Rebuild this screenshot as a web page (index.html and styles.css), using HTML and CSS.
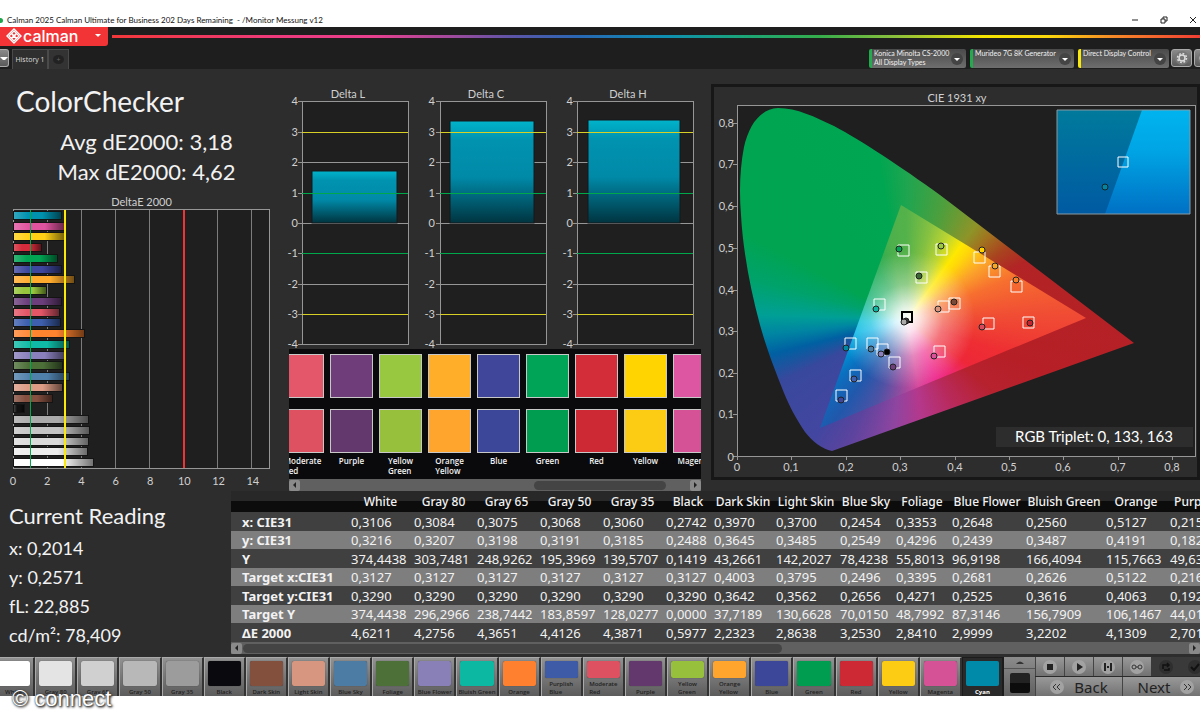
FILE: index.html
```html
<!DOCTYPE html>
<html lang="en">
<head>
    <meta charset="UTF-8">
    <meta name="viewport" content="width=device-width, initial-scale=1.0">
    <title>Calman 2025 - Monitor Messung v12</title>
    <link rel="stylesheet" href="styles.css">
</head>
<body>
    <header class="titlebar">
        <span class="status-dot"></span>
        <span class="title">Calman 2025 Calman Ultimate for Business 202 Days Remaining &nbsp;- /Monitor Messung v12</span>
        <div class="window-buttons">
            <button aria-label="Minimize"><svg width="8" height="8" viewBox="0 0 8 8"><path d="M1 4h6"/></svg></button>
            <button aria-label="Restore"><svg width="8" height="8" viewBox="0 0 8 8"><path d="M1 3h4v4h-4zM3 3v-2h4v4h-2"/></svg></button>
            <button aria-label="Close"><svg width="8" height="8" viewBox="0 0 8 8"><path d="M1 1l6 6M7 1l-6 6"/></svg></button>
        </div>
    </header>

    <div class="app">
        <div class="brandbar">
            <button class="brand">
                <svg width="16" height="16" viewBox="0 0 16 16" fill="none" stroke="#fff"><path d="M8 1l7 7-7 7-7-7z" stroke-width="1.4"/><path d="M8 3l2.3 2.3L8 7.600 5.700 5.300zM8 8.400l2.300 2.300L8 13l-2.300-2.300zM5.300 5.700L7.600 8l-2.300 2.300L3 8zM10.700 5.700L13 8l-2.300 2.300L8.400 8z" stroke-width="1.200"/></svg>
                <span class="brand-name">calman</span>
                <span class="caret"></span>
            </button>
            <div class="rainbow"></div>
        </div>

        <div class="toolbar">
            <button class="side-button" aria-label="Menu"><span class="caret"></span></button>
            <button class="tab">History 1</button>
            <button class="tab tab-add" aria-label="Add tab"><span>+</span></button>
            <div class="devices">
                <button class="device green"><span>Konica Minolta CS-2000<br>All Display Types</span><i class="drop"></i></button>
                <button class="device green wide"><span>Murideo 7G 8K Generator</span><i class="drop"></i></button>
                <button class="device yellow"><span>Direct Display Control</span><i class="drop"></i></button>
                <button class="gear" aria-label="Settings"><svg width="14" height="14" viewBox="0 0 14 14" fill="none" stroke="#ddd"><circle cx="7" cy="7" r="3" stroke-width="1.500"/><circle cx="7" cy="7" r="4.500" stroke-width="1.500" stroke-dasharray="1.800 1.730"/></svg></button>
                <button class="gear" aria-label="Help"><svg width="14" height="14" viewBox="0 0 14 14" fill="none" stroke="#ddd"><circle cx="7" cy="7" r="5"/></svg></button>
            </div>
        </div>

        <main class="workspace">
            <div class="charts">
                <section class="summary">
                    <h1>ColorChecker</h1>
                    <p class="score">Avg dE2000: 3,18</p>
                    <p class="score">Max dE2000: 4,62</p>
                    <h2 class="chart-title">DeltaE 2000</h2>
                    <div class="de-plot">
                        <div class="bars">
                            <span style="width:18.6%;background-color:#0092af"></span>
                            <span style="width:20%;background-color:#e0539f"></span>
                            <span style="width:20%;background-color:#ffd016"></span>
                            <span style="width:10.6%;background-color:#d52b3a"></span>
                            <span style="width:16.8%;background-color:#00a453"></span>
                            <span style="width:18.4%;background-color:#3d479e"></span>
                            <span style="width:23.6%;background-color:#ffab2d"></span>
                            <span style="width:12.4%;background-color:#97c63d"></span>
                            <span style="width:18.6%;background-color:#6c3f7c"></span>
                            <span style="width:17.8%;background-color:#e35668"></span>
                            <span style="width:18%;background-color:#3d5fae"></span>
                            <span style="width:27.5%;background-color:#ff842f"></span>
                            <span style="width:21.4%;background-color:#0fbba6"></span>
                            <span style="width:20%;background-color:#8a80bd"></span>
                            <span style="width:18.9%;background-color:#4d7039"></span>
                            <span style="width:21.6%;background-color:#4f80aa"></span>
                            <span style="width:19%;background-color:#dc9c85"></span>
                            <span style="width:14.8%;background-color:#865040"></span>
                            <span style="width:4%;background-color:#111"></span>
                            <span style="width:29.2%;background-color:#aaa"></span>
                            <span style="width:29.4%;background-color:#c4c4c4"></span>
                            <span style="width:29%;background-color:#dadada"></span>
                            <span style="width:28.5%;background-color:#ececec"></span>
                            <span style="width:30.8%;background-color:#fff"></span>
                        </div>
                        <i class="limit limit-1"></i>
                        <i class="limit limit-3"></i>
                        <i class="limit limit-10"></i>
                    </div>
                    <div class="de-axis"><span>0</span><span>2</span><span>4</span><span>6</span><span>8</span><span>10</span><span>12</span><span>14</span></div>
                </section>

                <section class="deltas">
                    <svg class="delta-chart" viewBox="280 85 421 264">
                        <defs>
                            <linearGradient id="cyan" x1="0" y1="0" x2="0" y2="1">
                                <stop offset="0" stop-color="#00b4cb"/>
                                <stop offset=".18" stop-color="#0093b0"/>
                                <stop offset=".55" stop-color="#008aa8"/>
                                <stop offset="1" stop-color="#003440"/>
                            </linearGradient>
                        </defs>
                        <g fill="#1f1f1f" stroke="#969696" shape-rendering="crispEdges">
                            <path d="M302 101h106v243H302z"/>
                            <path d="M440 101h106v243H440z"/>
                            <path d="M577 101h116v243H577z"/>
                            <path d="M298 101h4M298 132h4M298 162h110M298 193h4M298 223h110M298 253h4M298 284h110M298 314h4M298 344h4"/>
                            <path d="M436 101h4M436 132h4M436 162h110M436 193h4M436 223h110M436 253h4M436 284h110M436 314h4M436 344h4"/>
                            <path d="M573 101h4M573 132h4M573 162h120M573 193h4M573 223h120M573 253h4M573 284h120M573 314h4M573 344h4"/>
                        </g>
                        <g fill="url(#cyan)" stroke="#17191a">
                            <rect x="312" y="171" width="85" height="52"/>
                            <rect x="450" y="121" width="84" height="102"/>
                            <rect x="588" y="120" width="92" height="103"/>
                        </g>
                        <g stroke-width="1" shape-rendering="crispEdges">
                            <path stroke="#d8cf26" d="M302 132h106M440 132h106M577 132h116M302 314h106M440 314h106M577 314h116"/>
                            <path stroke="#00a84c" d="M302 193h106M440 193h106M577 193h116M302 253h106M440 253h106M577 253h116"/>
                        </g>
                        <g class="tick-title" text-anchor="middle">
                            <text x="348" y="98">Delta L</text>
                            <text x="486" y="98">Delta C</text>
                            <text x="628" y="98">Delta H</text>
                        </g>
                        <g class="tick" text-anchor="end">
                            <text x="298" y="105">4</text><text x="298" y="136">3</text><text x="298" y="166">2</text><text x="298" y="197">1</text><text x="298" y="227">0</text><text x="298" y="257">-1</text><text x="298" y="288">-2</text><text x="298" y="318">-3</text><text x="298" y="348">-4</text>
                            <text x="435" y="105">4</text><text x="435" y="136">3</text><text x="435" y="166">2</text><text x="435" y="197">1</text><text x="435" y="227">0</text><text x="435" y="257">-1</text><text x="435" y="288">-2</text><text x="435" y="318">-3</text><text x="435" y="348">-4</text>
                            <text x="573" y="105">4</text><text x="573" y="136">3</text><text x="573" y="166">2</text><text x="573" y="197">1</text><text x="573" y="227">0</text><text x="573" y="257">-1</text><text x="573" y="288">-2</text><text x="573" y="318">-3</text><text x="573" y="348">-4</text>
                        </g>
                    </svg>
                    <div class="patches">
                        <div class="patch-row">
                            <div class="patch"><b class="moderate-a"></b><b class="moderate"></b><span>Moderate Red</span></div>
                            <div class="patch"><b class="purple-a"></b><b class="purple"></b><span>Purple</span></div>
                            <div class="patch"><b class="lime-a"></b><b class="lime"></b><span>Yellow Green</span></div>
                            <div class="patch"><b class="amber-a"></b><b class="amber"></b><span>Orange Yellow</span></div>
                            <div class="patch"><b class="blue-a"></b><b class="blue"></b><span>Blue</span></div>
                            <div class="patch"><b class="green-a"></b><b class="green-c"></b><span>Green</span></div>
                            <div class="patch"><b class="red-a"></b><b class="red"></b><span>Red</span></div>
                            <div class="patch"><b class="yellow-a"></b><b class="yellow-c"></b><span>Yellow</span></div>
                            <div class="patch"><b class="magenta-a"></b><b class="magenta"></b><span>Magenta</span></div>
                        </div>
                        <div class="scrollbar">
                            <button class="arrow left" aria-label="Scroll left"></button>
                            <div class="track"><div class="thumb patch-thumb"></div></div>
                            <button class="arrow right" aria-label="Scroll right"></button>
                        </div>
                    </div>
                </section>

                <section class="cie">
                    <svg viewBox="715 88 482 388">
                        <defs>
                            <clipPath id="locus"><path d="M832 451C822 449 812 441 805 432C795 417 789 405 784 393C775 370 767 350 760 325C750 288 743 250 741 215C739 190 740 168 744 147C749 125 760 109 778 108C797 108 815 117 834 126C862 141 900 166 940 195L1134 343Z"/></clipPath>
                            <clipPath id="gamut"><path d="M901 205L1086 318L820 428Z"/></clipPath>
                            <linearGradient id="insetDark" x1="0" y1="0" x2="0" y2="1"><stop offset="0" stop-color="#007a9c"/><stop offset="1" stop-color="#005aa2"/></linearGradient>
                            <linearGradient id="insetLight" x1="0" y1="0" x2="0" y2="1"><stop offset="0" stop-color="#00b4f0"/><stop offset=".4" stop-color="#00a4e4"/><stop offset="1" stop-color="#0070c4"/></linearGradient>
                        </defs>
                        <text class="tick-title" x="957" y="102" text-anchor="middle">CIE 1931 xy</text>
                        <path d="M737 105h458v351H737z" fill="#1f1f1f" stroke="#969696" shape-rendering="crispEdges"/>
                        <path stroke="#969696" shape-rendering="crispEdges" d="M733 123h4M733 164h4M733 206h4M733 248h4M733 290h4M733 331h4M733 373h4M733 414h4M733 456h4M737 456v4M791 456v4M846 456v4M900 456v4M955 456v4M1009 456v4M1063 456v4M1118 456v4M1172 456v4"/>
                        <g class="tick" text-anchor="end">
                            <text x="734" y="127">0,8</text><text x="734" y="168">0,7</text><text x="734" y="210">0,6</text><text x="734" y="252">0,5</text><text x="734" y="294">0,4</text><text x="734" y="335">0,3</text><text x="734" y="377">0,2</text><text x="734" y="418">0,1</text><text x="734" y="461">0</text>
                        </g>
                        <g class="tick" text-anchor="middle">
                            <text x="737" y="471">0</text><text x="791" y="471">0,1</text><text x="846" y="471">0,2</text><text x="900" y="471">0,3</text><text x="955" y="471">0,4</text><text x="1009" y="471">0,5</text><text x="1063" y="471">0,6</text><text x="1118" y="471">0,7</text><text x="1172" y="471">0,8</text>
                        </g>
                        <g clip-path="url(#locus)"><foreignObject x="737" y="105" width="400" height="350"><div class="hue hue-outer"></div></foreignObject></g>
                        <g clip-path="url(#gamut)"><foreignObject x="737" y="105" width="400" height="350"><div class="hue hue-inner"></div></foreignObject></g>

                        <!-- targets -->
                        <g fill="none" stroke="#fff">
                            <path d="M898 245h11v11h-11zM936 244h11v11h-11zM974 252h11v11h-11zM989 266h11v11h-11zM1011 281h11v11h-11zM916 272h11v11h-11zM874 299h11v11h-11zM938 301h11v11h-11zM949 298h11v11h-11zM983 318h11v11h-11zM1023 317h11v11h-11zM845 338h11v11h-11zM867 338h11v11h-11zM877 344h11v11h-11zM889 357h11v11h-11zM934 346h11v11h-11zM850 370h11v11h-11zM836 390h11v11h-11z"/>
                            <path stroke="#000" stroke-width="2" d="M902 312h10v10h-10z"/>
                        </g>
                        <!-- readings -->
                        <g stroke="#222">
                            <circle cx="899" cy="249" r="3" fill="#00a651"/><circle cx="941" cy="246" r="3" fill="#9aca3c"/><circle cx="982" cy="250" r="3" fill="#ffd200"/><circle cx="995" cy="266" r="3" fill="#fba61f"/><circle cx="1016" cy="280" r="3" fill="#f5822a"/>
                            <circle cx="919" cy="276" r="3" fill="#3c6a32"/><circle cx="876" cy="309" r="3" fill="#12b5a0"/><circle cx="938" cy="309" r="3" fill="#d8967f"/><circle cx="954" cy="302" r="3" fill="#7a4a38"/><circle cx="982" cy="327" r="3" fill="#d94b5c"/>
                            <circle cx="1030" cy="323" r="3" fill="#c42330"/><circle cx="846" cy="348" r="3" fill="#0086a3"/><circle cx="871" cy="349" r="3" fill="#4a7fa8"/><circle cx="881" cy="354" r="3" fill="#8a80bd"/><circle cx="887" cy="352" r="3" fill="#000"/>
                            <circle cx="893" cy="367" r="3" fill="#6c3f7c"/><circle cx="934" cy="356" r="3" fill="#d9529a"/><circle cx="854" cy="379" r="3" fill="#3d5fae"/><circle cx="841" cy="400" r="3" fill="#3d479e"/><circle cx="906" cy="321" r="3" fill="#333"/><circle cx="904" cy="322" r="3" fill="#aaa"/>
                        </g>

                        <path d="M1057 110h133v104h-133z" fill="url(#insetDark)"/>
                        <path d="M1142 110h48v104h-85z" fill="url(#insetLight)"/>
                        <path d="M1057 110h133v104h-133z" fill="none" stroke="#8c9aa0"/>
                        <path d="M1118 157h10v10h-10z" fill="none" stroke="#fff"/>
                        <circle cx="1105" cy="187" r="3" fill="#0086a3" stroke="#122"/>
                        <path d="M996 427h197v20H996z" fill="#2d2d2d"/>
                        <text class="triplet" x="1094" y="442" text-anchor="middle">RGB Triplet: 0, 133, 163</text>
                    </svg>
                </section>
            </div>

            <div class="data">
                <section class="reading">
                    <h2>Current Reading</h2>
                    <p>x: 0,2014</p>
                    <p>y: 0,2571</p>
                    <p>fL: 22,885</p>
                    <p>cd/m²: 78,409</p>
                </section>
                <div class="table-wrap">
                    <table>
                        <colgroup><col class="c-head"><col class="c-m"><col class="c-m"><col class="c-m"><col class="c-m"><col class="c-m"><col class="c-xs"><col class="c-n"><col class="c-l"><col class="c-s"><col class="c-s"><col class="c-xl"><col class="c-xxl"><col class="c-l"><col class="c-last"></colgroup>
                        <thead>
                            <tr><th></th><th>White</th><th>Gray 80</th><th>Gray 65</th><th>Gray 50</th><th>Gray 35</th><th>Black</th><th>Dark Skin</th><th>Light Skin</th><th>Blue Sky</th><th>Foliage</th><th>Blue Flower</th><th>Bluish Green</th><th>Orange</th><th>Purplish Blue</th></tr>
                        </thead>
                        <tbody>
                            <tr><th>x: CIE31</th><td>0,3106</td><td>0,3084</td><td>0,3075</td><td>0,3068</td><td>0,3060</td><td>0,2742</td><td>0,3970</td><td>0,3700</td><td>0,2454</td><td>0,3353</td><td>0,2648</td><td>0,2560</td><td>0,5127</td><td>0,215</td></tr>
                            <tr><th>y: CIE31</th><td>0,3216</td><td>0,3207</td><td>0,3198</td><td>0,3191</td><td>0,3185</td><td>0,2488</td><td>0,3645</td><td>0,3485</td><td>0,2549</td><td>0,4296</td><td>0,2439</td><td>0,3487</td><td>0,4191</td><td>0,182</td></tr>
                            <tr><th>Y</th><td>374,4438</td><td>303,7481</td><td>248,9262</td><td>195,3969</td><td>139,5707</td><td>0,1419</td><td>43,2661</td><td>142,2027</td><td>78,4238</td><td>55,8013</td><td>96,9198</td><td>166,4094</td><td>115,7663</td><td>49,63</td></tr>
                            <tr><th>Target x:CIE31</th><td>0,3127</td><td>0,3127</td><td>0,3127</td><td>0,3127</td><td>0,3127</td><td>0,3127</td><td>0,4003</td><td>0,3795</td><td>0,2496</td><td>0,3395</td><td>0,2681</td><td>0,2626</td><td>0,5122</td><td>0,216</td></tr>
                            <tr><th>Target y:CIE31</th><td>0,3290</td><td>0,3290</td><td>0,3290</td><td>0,3290</td><td>0,3290</td><td>0,3290</td><td>0,3642</td><td>0,3562</td><td>0,2656</td><td>0,4271</td><td>0,2525</td><td>0,3616</td><td>0,4063</td><td>0,192</td></tr>
                            <tr><th>Target Y</th><td>374,4438</td><td>296,2966</td><td>238,7442</td><td>183,8597</td><td>128,0277</td><td>0,0000</td><td>37,7189</td><td>130,6628</td><td>70,0150</td><td>48,7992</td><td>87,3146</td><td>156,7909</td><td>106,1467</td><td>44,01</td></tr>
                            <tr><th>ΔE 2000</th><td>4,6211</td><td>4,2756</td><td>4,3651</td><td>4,4126</td><td>4,3871</td><td>0,5977</td><td>2,2323</td><td>2,8638</td><td>3,2530</td><td>2,8410</td><td>2,9999</td><td>3,2202</td><td>4,1309</td><td>2,701</td></tr>
                        </tbody>
                    </table>
                    <div class="scrollbar">
                        <button class="arrow left" aria-label="Scroll left"></button>
                        <div class="track"><div class="thumb table-thumb"></div></div>
                        <button class="arrow right" aria-label="Scroll right"></button>
                    </div>
                </div>
            </div>
        </main>

        <footer class="bottombar">
            <div class="swatches">
                <button><b class="white"></b><span>White</span></button>
                <button><b class="gray80"></b><span>Gray 80</span></button>
                <button><b class="gray65"></b><span>Gray 65</span></button>
                <button><b class="gray50"></b><span>Gray 50</span></button>
                <button><b class="gray35"></b><span>Gray 35</span></button>
                <button><b class="black"></b><span>Black</span></button>
                <button><b class="dark-skin"></b><span>Dark Skin</span></button>
                <button><b class="light-skin"></b><span>Light Skin</span></button>
                <button><b class="blue-sky"></b><span>Blue Sky</span></button>
                <button><b class="foliage"></b><span>Foliage</span></button>
                <button><b class="blue-flower"></b><span>Blue Flower</span></button>
                <button><b class="bluish-green"></b><span>Bluish Green</span></button>
                <button><b class="orange"></b><span>Orange</span></button>
                <button><b class="purplish"></b><span>Purplish<br>Blue</span></button>
                <button><b class="moderate"></b><span>Moderate<br>Red</span></button>
                <button><b class="purple"></b><span>Purple</span></button>
                <button><b class="lime"></b><span>Yellow<br>Green</span></button>
                <button><b class="amber"></b><span>Orange<br>Yellow</span></button>
                <button><b class="blue"></b><span>Blue</span></button>
                <button><b class="green-c"></b><span>Green</span></button>
                <button><b class="red"></b><span>Red</span></button>
                <button><b class="yellow-c"></b><span>Yellow</span></button>
                <button><b class="magenta"></b><span>Magenta</span></button>
                <button class="selected"><b class="cyan"></b><span>Cyan</span></button>
            </div>
            <div class="preview">
                <button aria-label="Expand"><svg width="10" height="8" viewBox="0 0 10 8"><path d="M1 5q4-5 8 0z" fill="#333"/></svg></button>
                <div class="preview-box"></div>
            </div>
            <div class="controls">
                <div class="transport">
                    <button aria-label="Stop"><svg width="14" height="14" viewBox="0 0 14 14"><path d="M4 4h6v6H4z"/></svg></button>
                    <button aria-label="Play"><svg width="14" height="14" viewBox="0 0 14 14"><path d="M5 3l6 4-6 4z"/></svg></button>
                    <button aria-label="Step"><svg width="14" height="14" viewBox="0 0 14 14"><path d="M3 3h2v8H3zM9 3h2v8H9zM6 6h2v2H6z"/></svg></button>
                    <button aria-label="Loop"><svg width="14" height="14" viewBox="0 0 14 14" fill="none" stroke="#333"><circle cx="4" cy="7" r="2"/><circle cx="10" cy="7" r="2"/><path d="M6 7h2"/></svg></button>
                    <button class="off" aria-label="Repeat"><svg width="14" height="14" viewBox="0 0 14 14" fill="none" stroke="#111" stroke-width="1.500"><path d="M4 9V5h6M8 3l2 2-2 2M10 8v2H5"/></svg></button>
                    <button class="off" aria-label="Accept"><svg width="14" height="14" viewBox="0 0 14 14" fill="none" stroke="#111" stroke-width="2"><path d="M3 7l3 3 5-6"/></svg></button>
                </div>
                <div class="nav">
                    <button><svg width="14" height="14" viewBox="0 0 14 14" fill="none" stroke="#333"><path d="M6 4L3 7l3 3M10 4L7 7l3 3"/></svg>Back</button>
                    <button>Next<svg width="14" height="14" viewBox="0 0 14 14" fill="none" stroke="#333"><path d="M4 4l3 3-3 3M8 4l3 3-3 3"/></svg></button>
                </div>
            </div>
        </footer>
        <div class="watermark">© connect</div>
    </div>
</body>
</html>
```

FILE: styles.css
```css
* {
    box-sizing: border-box;
}

body {
    margin: 0;
    min-height: 100vh;
    background: #fff;
    color: #f2f2f2;
    font-family: Lato, "Liberation Sans", sans-serif;
    overflow-x: hidden;
}

button {
    margin: 0;
    padding: 0;
    border: none;
    background: none;
    color: inherit;
    font: inherit;
}

h1, h2, p {
    margin: 0;
    font-weight: normal;
}

svg {
    display: block;
}

/* title bar */
.titlebar {
    display: flex;
    align-items: center;
    height: 27px;
    padding-top: 13px;
    color: #111;
    font: 8px/12px Lato, sans-serif;
}

.status-dot {
    width: 3px;
    height: 5px;
    margin-right: 4px;
    border-radius: 0 3px 3px 0;
    background: #1ea54c;
}

.window-buttons {
    display: flex;
    gap: 21px;
    margin-left: auto;
    padding-right: 3px;
}

.window-buttons path {
    fill: none;
    stroke: #222;
}

.app {
    position: relative;
    background: #2d2d2d;
}

/* brand bar */
.brandbar {
    display: flex;
    gap: 4px;
    background: #1e1e1e;
}

.brand {
    display: flex;
    align-items: center;
    width: 108px;
    height: 19px;
    padding: 0 7px 2px 6px;
    border-radius: 0 0 3px 0;
    background: #f23436;
    color: #fff;
}

.brand-name {
    margin: 0 auto 0 1px;
    font: 500 16px/16px Inter, sans-serif;
}

.caret {
    border: 3px solid transparent;
    border-top-color: #fff;
    border-bottom: 0;
}

.rainbow {
    flex: 1;
    height: 3px;
    margin-top: 8px;
    background: linear-gradient(90deg, #f2383a 0%, #ee3a7c 15%, #e8408f 24%, #a24a9c 31%, #5a55a8 37%, #2868b4 43%, #0e8fb0 51%, #1ba578 58%, #35ad4c 65%, #8cc03c 72%, #f5e500 80%, #fbd80c 86%, #f68a28 92%, #f23e34 100%);
}

/* toolbar */
.toolbar {
    display: flex;
    height: 23px;
    padding-top: 3px;
    background: #1e1e1e;
    color: #ddd;
    font-size: 7px;
    line-height: 9px;
    overflow: hidden;
}

.side-button {
    width: 9px;
    height: 18px;
    margin-right: 3px;
    border: 1px solid #aaa;
    border-left: 0;
    border-radius: 0 3px 3px 0;
    background: linear-gradient(#8a8a8a, #5a5a5a);
}

.side-button .caret {
    display: block;
}

.tab {
    width: 36px;
    border: 1px solid #4a4a4a;
    border-bottom: 0;
    background: #2f2f2f;
    font-family: "Open Sans", sans-serif;
}

.tab-add {
    width: 21px;
    background: #333;
}

.tab-add span {
    display: block;
    width: 11px;
    margin: 0 auto;
    border-radius: 50%;
    background: #222;
    color: #666;
}

.devices {
    display: flex;
    gap: 4px;
    margin: 0 -15px 0 auto;
}

.device {
    display: flex;
    width: 97px;
    height: 19px;
    padding: 0 3px 0 2px;
    border-left: 3px solid;
    border-radius: 2px;
    background: linear-gradient(#4a4a4a, #6e6e6e);
    text-align: left;
    white-space: nowrap;
}

.device.wide {
    width: 104px;
}

.device.green {
    border-color: #24a94f;
}

.device.yellow {
    width: 91px;
    border-color: #f8e80c;
}

.device span {
    flex: 1;
    color: #f2f2f2;
}

.drop {
    align-self: center;
    width: 12px;
    height: 12px;
    padding: 5px 3px;
    border-radius: 50%;
    background: #444;
}

.drop::after {
    content: "";
    display: block;
    border: 3px solid transparent;
    border-top-color: #fff;
    border-bottom: 0;
}

.gear {
    width: 21px;
    height: 18px;
    padding-left: 3px;
    margin-left: -2px;
    border: 1px solid #aaa;
    border-radius: 3px;
    background: linear-gradient(#8a8a8a, #5a5a5a);
}

.gear svg {
    border-radius: 50%;
    background: #777;
}

/* charts */
.charts {
    display: grid;
    grid-template-columns: minmax(0, 280fr) minmax(0, 421fr) minmax(0, 499fr);
    min-height: 422px;
    overflow: hidden;
}

.summary {
    padding: 14px 10px 0 13px;
}

.summary h1 {
    padding-left: 3px;
    font-size: 28px;
    line-height: 36px;
}

.score {
    padding-left: 10px;
    font-size: 22px;
    line-height: 30px;
    text-align: center;
}

.summary .score:first-of-type {
    margin-top: 8px;
}

.chart-title {
    padding-top: 8px;
    font-size: 11px;
    line-height: 14px;
    color: #d0d0d0;
    text-align: center;
}

.de-plot {
    position: relative;
    height: 260px;
    border: 1px solid #969696;
    background: repeating-linear-gradient(90deg, transparent 0, transparent calc(100% / 7.5 - 1px), #7c7c7c calc(100% / 7.5 - 1px), #7c7c7c calc(100% / 7.5)) #1f1f1f;
}

.bars {
    display: flex;
    flex-direction: column;
    justify-content: space-around;
    height: 100%;
}

.bars span {
    height: 7px;
    background-image: linear-gradient(90deg, rgba(255, 255, 255, 0.2), transparent 30%, transparent 60%, rgba(0, 0, 0, 0.55));
    box-shadow: 0 0 0 1px #141414;
}

.limit {
    position: absolute;
    top: 0;
    bottom: 0;
    width: 2px;
    margin-left: -1px;
}

.limit-1 {
    left: calc(100% / 15);
    width: 1px;
    background: #00a84c;
}

.limit-3 {
    left: calc(100% / 15 * 3);
    background: #f8e80c;
}

.limit-10 {
    left: calc(100% / 15 * 10);
    background: #ee3436;
}

.de-axis {
    display: grid;
    grid-template-columns: repeat(8, 1fr);
    width: calc(100% / 15 * 16);
    margin-left: calc(-100% / 15);
    padding-top: 5px;
    font-size: 11px;
    line-height: 14px;
    color: #d0d0d0;
    text-align: center;
}

.tick, .tick-title {
    fill: #d0d0d0;
    font-size: 11px;
}

.delta-chart {
    width: 100%;
    margin-top: 16px;
}

.patches {
    margin-left: 9px;
    background: #0a0a0c;
    overflow: hidden;
}

.patch-row {
    display: flex;
    gap: 6px;
    height: 130px;
    margin-left: -8px;
    padding-top: 5px;
}

.patch {
    flex: 0 0 43px;
}

.patch b {
    display: block;
    height: 44px;
    margin-bottom: 11px;
    border: 1px solid #c8c8c8;
}

.patch b + b {
    margin-bottom: 3px;
}

.patch span {
    display: block;
    width: min-content;
    margin: 0 auto;
    font: 600 8px/10px "Open Sans", sans-serif;
}

.scrollbar {
    display: flex;
    align-items: center;
    gap: 1px;
    height: 12px;
    background: #606060;
}

.arrow {
    display: flex;
    align-items: center;
    justify-content: center;
    width: 11px;
    height: 11px;
    border-radius: 2px;
    background: #8a8a8a;
}

.arrow::after {
    content: "";
    border: 3px solid transparent;
}

.arrow.left::after {
    border-right-color: #222;
    border-left: 0;
}

.arrow.right::after {
    border-left-color: #222;
    border-right: 0;
}

.track {
    flex: 1;
}

.thumb {
    height: 9px;
    border-radius: 5px;
    background: #444;
}

.patch-thumb {
    width: 34%;
    margin-left: 60%;
}

.table-thumb {
    width: 57%;
}

.cie {
    align-self: start;
    margin: 15px 0 0 10px;
    padding: 1px 0 1px 1px;
    border: 3px solid #171717;
}

.cie > svg {
    width: 100%;
}

.hue {
    width: 400px;
    height: 350px;
}

/* both hue wheels turn about the white point */
.hue-outer {
    background: conic-gradient(from 0deg at 170px 215px, #1fa550 0deg, #4f9f3c 18deg, #8e9428 36deg, #a0741f 44deg, #a8441f 54deg, #b22425 64deg, #b61f26 110deg, #b7222f 130deg, #b82a5c 152deg, #b4388c 172deg, #8f45a0 187deg, #5b449e 206deg, #4346a0 218deg, #38489c 244deg, #0060a2 256deg, #0084a2 264deg, #009f96 272deg, #00a26c 284deg, #00a451 298deg, #00a651 350deg, #1fa550 360deg);
}

.hue-inner {
    background:
        radial-gradient(circle at 170px 215px, #fff 0, rgba(255, 255, 255, 0.85) 12px, rgba(255, 255, 255, 0.35) 36px, transparent 68px),
        conic-gradient(from 0deg at 170px 215px, #55b24a 0deg, #86c141 14deg, #bcd532 26deg, #ffe800 36deg, #ffd60a 42deg, #fba32a 54deg, #f7702f 68deg, #f04c34 88deg, #ee2e33 108deg, #ee2738 126deg, #ef2a70 140deg, #ee2c90 154deg, #d8489c 170deg, #8f4c9f 186deg, #4f52a4 200deg, #2058ac 216deg, #0a70c0 230deg, #0094d6 242deg, #00b6e6 256deg, #00bfd8 268deg, #00b69c 284deg, #08ad66 304deg, #22aa52 330deg, #4cb04c 348deg, #55b24a 360deg);
}

.triplet {
    fill: #fff;
    font-size: 15px;
}

/* readings and table */
.data {
    display: flex;
    height: 166px;
}

.reading {
    flex: 0 0 231px;
    padding: 10px 0 0 9px;
    font-size: 18px;
    line-height: 29px;
}

.reading h2 {
    margin-bottom: 3px;
    font-size: 22px;
    line-height: 30px;
}

.table-wrap {
    flex: 1;
    min-width: 0;
    overflow: hidden;
}

table {
    width: 1025px;
    table-layout: fixed;
    border-collapse: collapse;
    font: 13px/18px "Noto Sans", sans-serif;
    white-space: nowrap;
}

.c-head { width: 118px; }
.c-xs { width: 48px; }
.c-s { width: 56px; }
.c-n { width: 62px; }
.c-m { width: 63px; }
.c-l { width: 64px; }
.c-xl { width: 74px; }
.c-xxl { width: 80px; }

thead th {
    height: 21px;
    padding: 0;
    background: linear-gradient(#282828 50%, #0c0c0c 50%);
    font: 500 12px/20px "Noto Sans", sans-serif;
}

tbody tr {
    height: 19px;
    background: #404040;
}

tbody tr:nth-child(even) {
    height: 18px;
    background: #7e7e7e;
}

tbody th {
    padding: 0 0 0 11px;
    text-align: left;
}

td {
    padding: 0 0 0 2px;
}

/* bottom bar */
.bottombar {
    display: flex;
    height: 39px;
    background: #2a2a2a;
    overflow: hidden;
}

.swatches {
    flex: 1;
    display: flex;
    min-width: 0;
    margin-left: -7px;
}

.swatches button {
    flex: 1;
    min-width: 0;
    display: flex;
    flex-direction: column;
    padding: 3px 3px 0;
    border-right: 2px solid #333;
    border-left: 1px solid #aaa;
    border-top: 1px solid #aaa;
    background: linear-gradient(#929292, #5c5c5c);
    color: #222;
    font: 600 6px/8px "Open Sans", sans-serif;
    white-space: nowrap;
}

.swatches b {
    flex: 1;
    align-self: stretch;
    border-radius: 2px;
    box-shadow: 0 0 1px #333;
}

.swatches span {
    align-self: center;
    padding-top: 2px;
    text-align: left;
}

.swatches .selected {
    border-color: #1c1c1c;
    background: #2a2a2a;
    color: #fff;
    font-weight: bold;
}

.preview {
    width: 31px;
    background: linear-gradient(#8c8c8c, #606060);
}

.preview button {
    display: flex;
    justify-content: center;
    align-items: center;
    width: 100%;
    height: 12px;
    border-bottom: 1px solid #555;
}

.preview-box {
    width: 20px;
    height: 20px;
    margin: 4px auto;
    border-radius: 2px;
    background: linear-gradient(#222 50%, #0c0c0c 50%);
}

.controls {
    width: 165px;
    display: grid;
    grid-template-rows: 19px 19px;
    gap: 1px;
}

.transport {
    display: grid;
    grid-template-columns: repeat(6, 29px);
}

.transport button, .nav button {
    display: flex;
    align-items: center;
    justify-content: center;
    border-left: 1px solid #444;
    background: linear-gradient(#999, #727272);
}

.transport .off {
    border-color: #3a3a3a;
    background: #3a3a3a;
}

.controls svg {
    border-radius: 50%;
    background: #a2a2a2;
    fill: #222;
}

.controls svg[fill="none"] {
    fill: none;
}

.controls .off svg {
    background: #2e2e2e;
}

.nav {
    display: grid;
    grid-template-columns: 87px 87px;
}

.nav button {
    gap: 10px;
    color: #222;
    font: 15px/18px "Noto Sans", sans-serif;
}

.watermark {
    position: absolute;
    left: 12px;
    bottom: -15px;
    color: #fff;
    font: 22px/24px "Liberation Sans", sans-serif;
    text-shadow: 0 0 1px #444, 1px 1px 2px #333, 1px 1px 3px #333;
}

/* patch colours, the -a ones are the measured values */
.white { background: #fff; }
.gray80 { background: #e4e4e4; }
.gray65 { background: #d0d0d0; }
.gray50 { background: #b8b8b8; }
.gray35 { background: #9c9c9c; }
.black { background: #0a0a0e; }
.dark-skin { background: #84503e; }
.light-skin { background: #d69680; }
.blue-sky { background: #4c7ba4; }
.foliage { background: #4d7039; }
.blue-flower { background: #8a80b8; }
.bluish-green { background: #0cb8a2; }
.orange { background: #ff812f; }
.purplish { background: #3e5ba8; }
.moderate { background: #dd5161; }
.moderate-a { background: #e4576a; }
.purple { background: #63386c; }
.purple-a { background: #6f3e7a; }
.lime { background: #97c03c; }
.lime-a { background: #98c840; }
.amber { background: #ffa52d; }
.amber-a { background: #ffae2a; }
.blue { background: #3d479a; }
.blue-a { background: #40479a; }
.green-c { background: #009c50; }
.green-a { background: #00a457; }
.red { background: #cc2935; }
.red-a { background: #d42d3a; }
.yellow-c { background: #fccb14; }
.yellow-a { background: #ffd400; }
.magenta { background: #d65296; }
.magenta-a { background: #dc56a2; }
.cyan { background: #008aaa; }
```
